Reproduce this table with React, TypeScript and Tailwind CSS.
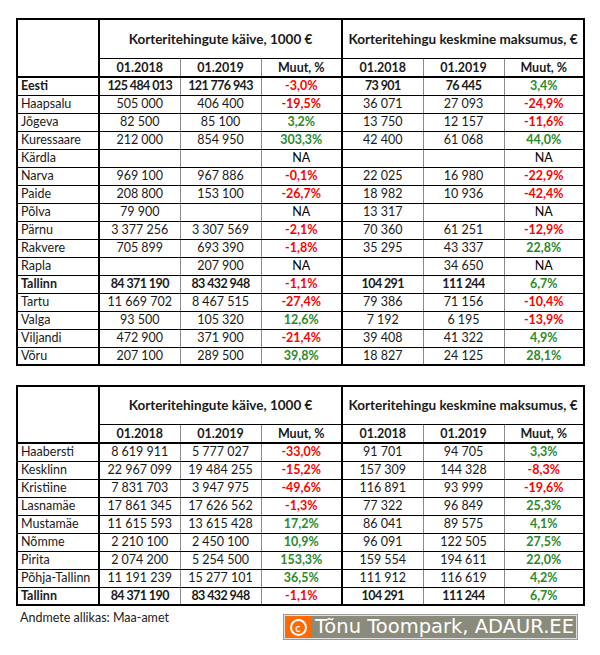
type Row = { name: string; v: string[]; bold?: boolean };

const table1: Row[] = [
  { name: "Eesti", v: ["125 484 013", "121 776 943", "-3,0%", "73 901", "76 445", "3,4%"], bold: true },
  { name: "Haapsalu", v: ["505 000", "406 400", "-19,5%", "36 071", "27 093", "-24,9%"] },
  { name: "Jõgeva", v: ["82 500", "85 100", "3,2%", "13 750", "12 157", "-11,6%"] },
  { name: "Kuressaare", v: ["212 000", "854 950", "303,3%", "42 400", "61 068", "44,0%"] },
  { name: "Kärdla", v: ["", "", "NA", "", "", "NA"] },
  { name: "Narva", v: ["969 100", "967 886", "-0,1%", "22 025", "16 980", "-22,9%"] },
  { name: "Paide", v: ["208 800", "153 100", "-26,7%", "18 982", "10 936", "-42,4%"] },
  { name: "Põlva", v: ["79 900", "", "NA", "13 317", "", "NA"] },
  { name: "Pärnu", v: ["3 377 256", "3 307 569", "-2,1%", "70 360", "61 251", "-12,9%"] },
  { name: "Rakvere", v: ["705 899", "693 390", "-1,8%", "35 295", "43 337", "22,8%"] },
  { name: "Rapla", v: ["", "207 900", "NA", "", "34 650", "NA"] },
  { name: "Tallinn", v: ["84 371 190", "83 432 948", "-1,1%", "104 291", "111 244", "6,7%"], bold: true },
  { name: "Tartu", v: ["11 669 702", "8 467 515", "-27,4%", "79 386", "71 156", "-10,4%"] },
  { name: "Valga", v: ["93 500", "105 320", "12,6%", "7 192", "6 195", "-13,9%"] },
  { name: "Viljandi", v: ["472 900", "371 900", "-21,4%", "39 408", "41 322", "4,9%"] },
  { name: "Võru", v: ["207 100", "289 500", "39,8%", "18 827", "24 125", "28,1%"] },
];

const table2: Row[] = [
  { name: "Haabersti", v: ["8 619 911", "5 777 027", "-33,0%", "91 701", "94 705", "3,3%"] },
  { name: "Kesklinn", v: ["22 967 099", "19 484 255", "-15,2%", "157 309", "144 328", "-8,3%"] },
  { name: "Kristiine", v: ["7 831 703", "3 947 975", "-49,6%", "116 891", "93 999", "-19,6%"] },
  { name: "Lasnamäe", v: ["17 861 345", "17 626 562", "-1,3%", "77 322", "96 849", "25,3%"] },
  { name: "Mustamäe", v: ["11 615 593", "13 615 428", "17,2%", "86 041", "89 575", "4,1%"] },
  { name: "Nõmme", v: ["2 210 100", "2 450 100", "10,9%", "96 091", "122 505", "27,5%"] },
  { name: "Pirita", v: ["2 074 200", "5 254 500", "153,3%", "159 554", "194 611", "22,0%"] },
  { name: "Põhja-Tallinn", v: ["11 191 239", "15 277 101", "36,5%", "111 912", "116 619", "4,2%"] },
  { name: "Tallinn", v: ["84 371 190", "83 432 948", "-1,1%", "104 291", "111 244", "6,7%"], bold: true },
];

// right border of each value column: gray inside a group, black between groups
const colBorder = [
  "border-r border-r-[#8a8a8a]",
  "border-r border-r-[#8a8a8a]",
  "border-r-2 border-r-black",
  "border-r border-r-[#8a8a8a]",
  "border-r border-r-[#8a8a8a]",
  "",
];

function pctClass(s: string) {
  if (s === "NA" || s === "") return "text-black";
  return s.startsWith("-") ? "font-bold text-[#ff0000]" : "font-bold text-[#2b8a2b]";
}

function DataTable({ rows, headH }: { rows: Row[]; headH: string }) {
  return (
    <table className="w-[567px] table-fixed border-collapse border-2 border-black text-[12.5px] text-[#1a1a1a]">
      <colgroup>
        <col className="w-[82px]" />
        <col className="w-[81px]" />
        <col className="w-[81px]" />
        <col className="w-[81px]" />
        <col className="w-[81px]" />
        <col className="w-[81px]" />
        <col className="w-[80px]" />
      </colgroup>
      <thead>
        <tr className={headH}>
          <td rowSpan={2} className="border-r-2 border-b-2 border-black" />
          <th colSpan={3} className="border-r-2 border-b border-black p-0 text-center text-[13.5px] font-bold">
            Korteritehingute käive, 1000 €
          </th>
          <th colSpan={3} className="border-b border-black p-0 text-center text-[13.5px] font-bold">
            Korteritehingu keskmine maksumus, €
          </th>
        </tr>
        <tr className="h-[19px]">
          {["01.2018", "01.2019", "Muut, %", "01.2018", "01.2019", "Muut, %"].map((h, i) => (
            <th key={i} className={`border-b-2 border-b-black p-0 text-center font-bold leading-[17px] ${colBorder[i]}`}>
              {h}
            </th>
          ))}
        </tr>
      </thead>
      <tbody>
        {rows.map((r, ri) => (
          <tr key={ri} className="h-[18px]">
            <td className={`border-r-2 border-b border-black py-0 pl-[3px] leading-[16px] whitespace-nowrap ${r.bold ? "font-bold" : ""}`}>
              {r.name}
            </td>
            {r.v.map((c, i) => (
              <td
                key={i}
                className={`border-b border-b-black p-0 text-center leading-[16px] ${colBorder[i]} ${
                  i === 2 || i === 5 ? pctClass(c) : r.bold ? "font-bold tracking-[-0.6px]" : ""
                }`}
              >
                {c}
              </td>
            ))}
          </tr>
        ))}
      </tbody>
    </table>
  );
}

export default function App() {
  return (
    <div className="h-[655px] w-[600px] bg-white pt-[18px] pl-[16px] font-['Lato','Liberation_Sans',sans-serif]">
      <DataTable rows={table1} headH="h-[39px]" />
      <div className="mt-[19px]">
        <DataTable rows={table2} headH="h-[38px]" />
      </div>
      <div className="flex w-[567px] items-start justify-between">
        <div className="pt-[3px] pl-[4px] text-[12.5px] text-[#222]">Andmete allikas: Maa-amet</div>
        <div className="mt-[8px] mr-[5px] flex h-[26px] w-[295px] border border-[#9a9a9a] bg-[#e0e0e0] p-px">
          <div className="flex w-[26px] items-center justify-center bg-[#ff6a00]">
            <span className="flex h-[17px] w-[17px] items-center justify-center rounded-full border-2 border-white text-[11px] leading-none font-bold text-white">
              c
            </span>
          </div>
          <div className="flex flex-1 items-center bg-[#8b8b7c] pl-[4px] font-['DejaVu_Sans',sans-serif] text-[19.5px] leading-none text-white">
            Tõnu Toompark, ADAUR.EE
          </div>
        </div>
      </div>
    </div>
  );
}
